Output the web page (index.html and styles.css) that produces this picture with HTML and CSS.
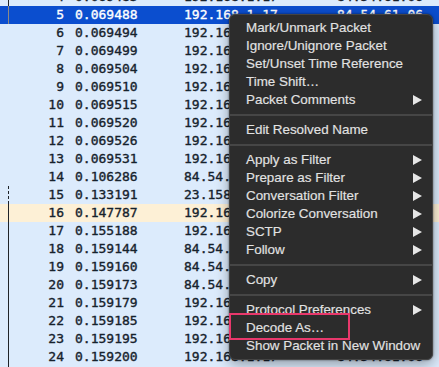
FILE: index.html
```html
<!DOCTYPE html>
<html>
<head>
<meta charset="utf-8">
<link rel="stylesheet" href="styles.css">
</head>
<body>
<div class="list">
  <div class="row"><span class="no rel">4</span><span>0.069483</span><span>192.168.1.17</span><span>84.54.61.06</span></div>
  <div class="row sel"><span class="no rel">5</span><span>0.069488</span><span>192.168.1.17</span><span>84.54.61.06</span></div>
  <div class="row"><span class="no">6</span><span>0.069494</span><span>192.168.1.17</span><span>84.54.61.06</span></div>
  <div class="row"><span class="no">7</span><span>0.069499</span><span>192.168.1.17</span><span>84.54.61.06</span></div>
  <div class="row"><span class="no">8</span><span>0.069504</span><span>192.168.1.17</span><span>84.54.61.06</span></div>
  <div class="row"><span class="no">9</span><span>0.069510</span><span>192.168.1.17</span><span>84.54.61.06</span></div>
  <div class="row"><span class="no">10</span><span>0.069515</span><span>192.168.1.17</span><span>84.54.61.06</span></div>
  <div class="row"><span class="no">11</span><span>0.069520</span><span>192.168.1.17</span><span>84.54.61.06</span></div>
  <div class="row"><span class="no">12</span><span>0.069526</span><span>192.168.1.17</span><span>84.54.61.06</span></div>
  <div class="row"><span class="no">13</span><span>0.069531</span><span>192.168.1.17</span><span>84.54.61.06</span></div>
  <div class="row"><span class="no">14</span><span>0.106286</span><span>84.54.61.06</span><span>192.168.1.17</span></div>
  <div class="row"><span class="no dash">15</span><span>0.133191</span><span>23.158.16.2</span><span>192.168.1.17</span></div>
  <div class="row mark"><span class="no rel">16</span><span>0.147787</span><span>192.168.1.17</span><span>23.158.16.2</span></div>
  <div class="row"><span class="no rel">17</span><span>0.155188</span><span>192.168.1.17</span><span>23.158.16.28</span></div>
  <div class="row"><span class="no rel">18</span><span>0.159144</span><span>84.54.61.06</span><span>192.168.1.17</span></div>
  <div class="row"><span class="no rel">19</span><span>0.159160</span><span>84.54.61.06</span><span>192.168.1.17</span></div>
  <div class="row"><span class="no rel">20</span><span>0.159173</span><span>84.54.61.06</span><span>192.168.1.17</span></div>
  <div class="row"><span class="no rel">21</span><span>0.159179</span><span>192.168.1.17</span><span>84.54.61.06</span></div>
  <div class="row"><span class="no rel">22</span><span>0.159185</span><span>192.168.1.17</span><span>84.54.61.06</span></div>
  <div class="row"><span class="no rel">23</span><span>0.159195</span><span>192.168.1.17</span><span>84.54.61.06</span></div>
  <div class="row"><span class="no rel">24</span><span>0.159200</span><span>192.168.1.17</span><span>84.54.61.06</span></div>
  <div class="row"><span class="no rel">25</span><span>0.159205</span><span>192.168.1.17</span><span>84.54.61.06</span></div>
</div>

<div class="menu">
  <div class="item">Mark/Unmark Packet</div>
  <div class="item">Ignore/Unignore Packet</div>
  <div class="item">Set/Unset Time Reference</div>
  <div class="item">Time Shift…</div>
  <div class="item">Packet Comments<svg class="arr" width="9" height="10" viewBox="0 0 9 10"><polygon points="0,0 9,5 0,10"/></svg></div>
  <div class="sep"></div>
  <div class="item">Edit Resolved Name</div>
  <div class="sep"></div>
  <div class="item">Apply as Filter<svg class="arr" width="9" height="10" viewBox="0 0 9 10"><polygon points="0,0 9,5 0,10"/></svg></div>
  <div class="item">Prepare as Filter<svg class="arr" width="9" height="10" viewBox="0 0 9 10"><polygon points="0,0 9,5 0,10"/></svg></div>
  <div class="item">Conversation Filter<svg class="arr" width="9" height="10" viewBox="0 0 9 10"><polygon points="0,0 9,5 0,10"/></svg></div>
  <div class="item">Colorize Conversation<svg class="arr" width="9" height="10" viewBox="0 0 9 10"><polygon points="0,0 9,5 0,10"/></svg></div>
  <div class="item">SCTP<svg class="arr" width="9" height="10" viewBox="0 0 9 10"><polygon points="0,0 9,5 0,10"/></svg></div>
  <div class="item">Follow<svg class="arr" width="9" height="10" viewBox="0 0 9 10"><polygon points="0,0 9,5 0,10"/></svg></div>
  <div class="sep"></div>
  <div class="item">Copy<svg class="arr" width="9" height="10" viewBox="0 0 9 10"><polygon points="0,0 9,5 0,10"/></svg></div>
  <div class="sep"></div>
  <div class="item">Protocol Preferences<svg class="arr" width="9" height="10" viewBox="0 0 9 10"><polygon points="0,0 9,5 0,10"/></svg></div>
  <div class="item">Decode As…</div>
  <div class="item">Show Packet in New Window</div>
</div>
<div class="highlight"></div>
</body>
</html>
```

FILE: styles.css
```css
html, body {
  margin: 0;
  padding: 0;
  background: #dcebfc;
  overflow: hidden;
  width: 439px;
  height: 367px;
}
.list {
  margin-top: -12px;
  font-family: "DejaVu Sans Mono", "Liberation Mono", monospace;
  font-size: 13px;
  color: #16222c;
  -webkit-text-stroke: 0.35px currentColor;
}
.row {
  display: grid;
  grid-template-columns: 8px 56px 109px 164px 120px;
  height: 18px;
  line-height: 18px;
  white-space: nowrap;
}
.row::before {
  content: "";
}
.row .no {
  text-align: right;
  box-sizing: border-box;
}
.row span:nth-child(2),
.row span:nth-child(3) { padding-left: 11px; }
.row .rel { border-left: 1px solid #1f2328; }
.row .dash { border-left: 1px dashed #1f2328; }
.row.sel {
  background: #0b4ecf;
  color: #ffffff;
}
.row.sel .rel { border-left-color: #8d8a86; }
.row.mark { background: #fdf0d6; }

.menu {
  position: absolute;
  left: 229px;
  top: 14px;
  width: 204px;
  box-sizing: border-box;
  padding: 4px 0;
  background: #2c2c2c;
  border: 1px solid #444444;
  border-radius: 6px;
  box-shadow: 0 4px 14px rgba(0, 0, 0, 0.35), 0 0 2px rgba(0, 0, 0, 0.6);
  font-family: "Liberation Sans", Arial, sans-serif;
  font-size: 13.4px;
  color: #e2e2e2;
  -webkit-text-stroke: 0.15px currentColor;
}
.item {
  height: 18px;
  line-height: 18px;
  padding-left: 16px;
  padding-right: 10px;
  display: flex;
  align-items: center;
  justify-content: space-between;
  white-space: nowrap;
}
.arr { fill: #e6e6e6; flex: none; }
.sep {
  height: 12px;
  display: flex;
  align-items: center;
}
.sep::after {
  content: "";
  flex: 1;
  height: 2px;
  background: #464646;
}
.highlight {
  position: absolute;
  left: 229px;
  top: 313px;
  width: 121px;
  height: 27px;
  box-sizing: border-box;
  border: 2.5px solid #e8386c;
}
```
